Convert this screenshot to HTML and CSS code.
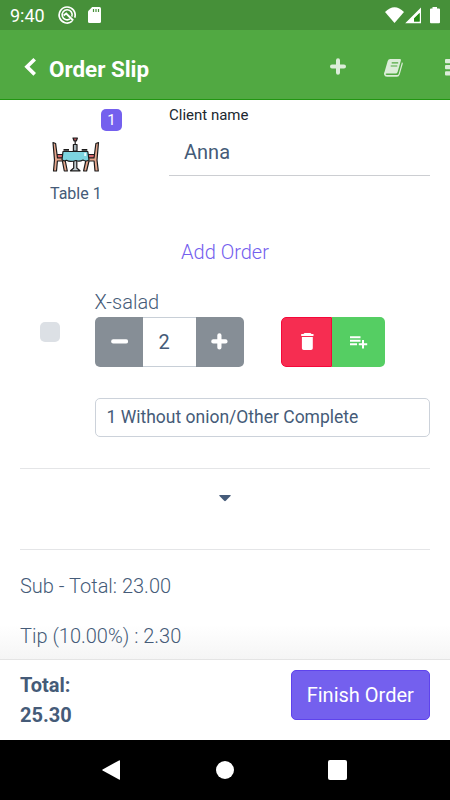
FILE: index.html
```html
<!DOCTYPE html>
<html lang="en">
<head>
<meta charset="utf-8">
<title>Order Slip</title>
<link rel="stylesheet" href="styles.css">
</head>
<body>
<div class="status">
  <span class="clock">9:40</span>
  <svg class="status-round" width="18" height="18" viewBox="0 0 18 18" fill="none" stroke="#fff"><path d="M14.2 15.2A8 8 0 1 1 16.7 11.6" stroke-width="1.7"/><path d="M12 12.9A5 5 0 1 1 13.8 10.6" stroke-width="1.6"/><path d="M5.6 9.5L8.2 7.6L15.2 14.5" stroke-width="1.9"/></svg>
  <svg class="status-card" width="13" height="16" viewBox="0 0 13 16"><path d="M4.2 0H11.5Q13 0 13 1.5V14.5Q13 16 11.5 16H1.5Q0 16 0 14.5V4.3Z" fill="#fff"/><path d="M5.5 2V5M8 2V5M10.5 2V5" stroke="#469039" stroke-width="1.2"/></svg>
  <svg class="status-signal" width="56" height="17" viewBox="0 0 56 17"><path d="M0 5Q9.5-4.5 19 5L9.5 16Z" fill="#fff"/><path fill="#fff" fill-rule="evenodd" d="M20.2 16.3L36 .5V16.3ZM34.6 6L29 11.5V14.5H34.6Z"/><path d="M29 14.5V11.5L34.6 6V14.5Z" fill="#268a16"/><path d="M47.5 0H52V1.5H54Q55 1.5 55 2.5V15.3Q55 16.3 54 16.3H46Q45 16.3 45 15.3V2.5Q45 1.5 46 1.5H47.5Z" fill="#fff"/></svg>
</div>
<header class="header">
  <svg class="back" width="13" height="20" viewBox="0 0 13 20"><path d="M10.7 2.2L3 9.8L10.7 17.4" fill="none" stroke="#fff" stroke-width="3.7"/></svg>
  <h1 class="title">Order Slip</h1>
  <svg class="add" width="16" height="17" viewBox="0 0 16 17"><path d="M8 2.3V14.7M2 8.5H14" stroke="#dcedd9" stroke-width="4" stroke-linecap="round"/></svg>
  <svg class="book" width="20" height="18" viewBox="0 0 20 18"><path d="M6.2 0H15.8Q17.3 0 16.9 1.4L13.6 13Q13.1 14.5 11.6 14.5H2.5Q1.4 14.5 1.6 15.2Q1.8 15.9 3 15.9H13.3Q14.3 15.9 14.7 14.7L17.9 3.2Q19.1 3.6 18.7 5L15.7 15.5Q15 17.8 13 17.8H3Q.5 17.8 0 15.2Q-.1 14 .6 12.7L3.7 2Q4.3 0 6.2 0Z" fill="#dcedd9"/><path d="M7.7 3.8H14.2M6.7 7H13.3" stroke="#51a942" stroke-width="1.2"/></svg>
  <svg class="more" width="5" height="17" viewBox="0 0 5 17" fill="#dcedd9"><rect width="7" height="4.2" rx="1"/><rect y="6.1" width="7" height="4.2" rx="1"/><rect y="12.2" width="7" height="4.2" rx="1"/></svg>
</header>
<main class="content">
  <section class="client">
    <div class="table">
      <span class="badge">1</span>
      <svg class="table-icon" width="48" height="36" viewBox="0 0 48 36" stroke="#1c1c1c" stroke-width="1.2" stroke-linejoin="round">
        <path d="M21 1H25.4L24.4 3.8H22Z" fill="#ae4e57"/><path d="M23.2 4V8"/>
        <path d="M21.4 7.5H25V14H21.4Z" fill="#a7b5ba"/>
        <path d="M21.7 23H24.8V31L28 33.8H18.5L21.7 31Z" fill="#c1cdd1"/>
        <path d="M4.5 17.5H11V21H4.5ZM36 17.5H42.7V21H36Z" fill="#d6666b"/>
        <path d="M1 5.5L3.6 6.5L5.5 21H12.7L15.3 34H12.3L10.4 24H5.4L4.5 34H1.5L2.5 23Z" fill="#e5a68c"/>
        <path d="M46.5 5.5L43.9 6.5L42 21H34.4L31.6 34H34.6L37 24H42.1L43 34H46.3L45 23Z" fill="#e5a68c"/>
        <path d="M11 14.5H35.8L37 23Q34 25 31 23Q27.5 25 24 23.5Q18 25.4 14.5 23.3Q12.3 24.7 10 22.8Z" fill="#7dd4df"/>
        <path d="M11.5 12.8H17M29.7 12.8H35.3" stroke-width="1.7"/><path d="M33.2 15.8V19" stroke="#e3fbff" stroke-width="2"/>
      </svg>
      <span class="table-name">Table 1</span>
    </div>
    <div class="field">
      <label class="label">Client name</label>
      <div class="value">Anna</div>
    </div>
  </section>
  <a class="add-order">Add Order</a>
  <section class="item">
    <span class="check"></span>
    <div class="details">
      <div class="item-name">X-salad</div>
      <div class="controls">
        <div class="stepper">
          <button class="step"><svg width="18" height="18" viewBox="0 0 18 18"><path d="M3.2 8.4H16" stroke="#fff" stroke-width="4.2" stroke-linecap="round"/></svg></button>
          <span class="qty">2</span>
          <button class="step"><svg width="18" height="18" viewBox="0 0 18 18"><path d="M8.4 2.3V14.5M2.3 8.4H14.5" stroke="#fff" stroke-width="4.2" stroke-linecap="round"/></svg></button>
        </div>
        <div class="actions">
          <button class="delete"><svg width="14" height="18" viewBox="0 0 14 18" fill="#fff"><path d="M4.5 0H10.5L11.5 1H13.5V3H1.2V1H3.5ZM1.9 4H12.8V15.2Q12.8 17 11 17H3.7Q1.9 17 1.9 15.2Z"/></svg></button>
          <button class="note"><svg width="18" height="14" viewBox="0 0 18 14" stroke="#fff" stroke-width="2"><path d="M0 2.2H10.5M0 5.7H10.5M0 9.2H7M8.8 9.2H17.2M13 5V13.4"/></svg></button>
        </div>
      </div>
      <div class="remark">1 Without onion/Other Complete</div>
    </div>
  </section>
  <section class="expand"><svg width="12" height="7" viewBox="0 0 12 7"><path d="M.8 0H11.2Q12.2.2 11.5 1L6.8 5.8Q6 6.5 5.2 5.8L.5 1Q-.2.2.8 0Z" fill="#465c7a"/></svg></section>
  <p class="sum subtotal">Sub - Total: 23.00</p>
  <p class="sum tip">Tip (10.00%) : 2.30</p>
</main>
<footer class="footer">
  <div class="total">Total:<br>25.30</div>
  <button class="finish">Finish Order</button>
</footer>
<nav class="nav">
  <svg width="18" height="20" viewBox="0 0 18 20"><path d="M18 .8V19.2Q18 20 17 19.6L.6 10.6Q-.2 10 .6 9.4L17 .4Q18 0 18 .8Z" fill="#fff"/></svg>
  <span class="home"></span>
  <span class="recent"></span>
</nav>
</body>
</html>
```
FILE: styles.css
```css
* { box-sizing: border-box; }
body { margin: 0; width: 450px; height: 800px; overflow: hidden; display: flex; flex-direction: column; background: #fff; color: #455b78; font-family: Roboto, sans-serif; }
svg { display: block; flex: none; }
button { border: 0; padding: 0; margin: 0; font: inherit; display: flex; align-items: center; justify-content: center; }
.status { height: 30px; flex: none; display: flex; align-items: flex-start; background: #469039; color: #fff; padding-left: 10px; }
.clock { width: 48px; font-size: 18px; line-height: 32px; }
.status-round { margin-top: 6px; }
.status-card { margin: 7px 0 0 12px; }
.status-signal { margin: 7px 9px 0 auto; }
.header { height: 70px; flex: none; display: flex; align-items: flex-start; background: #51a942; border-bottom: 1px solid #219611; color: #fff; }
.back { margin: 27px 0 0 24px; }
.title { margin: 25px 0 0 12px; width: 281px; font-size: 22.4px; line-height: 29px; font-weight: 700; }
.add { margin-top: 28px; }
.book { margin: 29px 0 0 38px; }
.more { margin: 29px 0 0 auto; }
.content { height: 559px; flex: none; padding: 0 20px; overflow: hidden; background: linear-gradient(#fff 0, #fff 525px, #f5f5f5 559px); }
.client { height: 110px; display: flex; }
.table { width: 149px; padding: 9px 0 0 30px; display: flex; flex-direction: column; }
.badge { width: 21px; height: 22px; margin-left: 51px; border-radius: 5px; background: #7460ee; color: #fff; font-size: 15px; line-height: 22px; text-align: center; }
.table-icon { margin: 6px 0 0 2px; }
.table-name { margin-top: 11px; font-size: 16px; line-height: 20px; }
.field { flex: 1; height: 76px; border-bottom: 1px solid #ccced2; }
.label { display: block; padding-top: 5px; font-size: 15px; line-height: 20px; color: #202830; }
.value { padding: 14px 0 0 15px; font-size: 20px; line-height: 26px; }
.add-order { display: block; margin-top: 27px; text-align: center; color: #7460ee; font-size: 20px; line-height: 30px; font-weight: 300; }
.item { height: 182px; margin-top: 20px; display: flex; border-bottom: 1px solid #e4e5e7; }
.check { width: 20px; height: 20px; margin: 35px 34.5px 0 20px; flex: none; border-radius: 5px; background: #dce0e5; }
.details { flex: 1; }
.item-name { height: 30px; font-size: 20px; line-height: 30px; font-weight: 300; }
.controls { display: flex; gap: 37px; }
.stepper { width: 149.5px; height: 50px; display: flex; border-radius: 5px; overflow: hidden; }
.step { width: 48px; height: 50px; background: #868e96; }
.qty { flex: 1; padding-left: 16px; font-size: 20px; line-height: 48px; border: 1px solid #c8cfd7; border-left: 0; border-right: 0; }
.actions { display: flex; height: 50px; border-radius: 5px; overflow: hidden; }
.delete { width: 51px; background: #f62d51; border: 1px solid #f5083a; border-radius: 5px 0 0 5px; }
.note { width: 53px; background: #55ce63; }
.remark { height: 39px; margin-top: 31px; padding-left: 11px; border: 1px solid #ccd2da; border-radius: 5px; font-size: 17.5px; line-height: 37px; }
.expand { height: 81px; display: flex; justify-content: center; padding-top: 26px; border-bottom: 1px solid #e4e5e7; }
.sum { margin: 0; font-size: 20px; line-height: 30px; font-weight: 300; }
.subtotal { margin-top: 21px; }
.tip { margin-top: 20px; }
.footer { height: 81px; flex: none; display: flex; justify-content: space-between; padding: 10px 20px; border-top: 1px solid #e4e4e4; background: #fff; }
.total { font-size: 20px; line-height: 30px; font-weight: 700; }
.finish { width: 139.5px; height: 50px; border: 1px solid #5e43ed; border-radius: 5px; background: #7460ee; color: #fff; font-size: 20px; }
.nav { height: 60px; flex: none; display: flex; align-items: center; background: #000; padding-left: 102px; }
.home { width: 18px; height: 18px; margin-left: 96px; border-radius: 50%; background: #fff; }
.recent { width: 19px; height: 20px; margin-left: 94px; border-radius: 2px; background: #fff; }
```
